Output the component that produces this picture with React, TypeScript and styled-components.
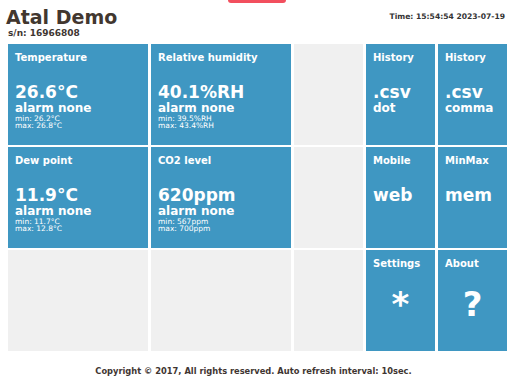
import styled, { createGlobalStyle } from "styled-components";

const GlobalStyle = createGlobalStyle`
  html, body {
    margin: 0;
    padding: 0;
    background: #ffffff;
    font-family: "DejaVu Sans", Verdana, sans-serif;
  }
`;

type Kind = "blue" | "blank";

interface TileData {
  kind: Kind;
  title?: string;
  value?: string;
  sub?: string;
  alarm?: string;
  min?: string;
  max?: string;
  symbol?: string;
}

const tiles: TileData[] = [
  { kind: "blue", title: "Temperature", value: "26.6°C", alarm: "alarm none", min: "26.2°C", max: "26.8°C" },
  { kind: "blue", title: "Relative humidity", value: "40.1%RH", alarm: "alarm none", min: "39.5%RH", max: "43.4%RH" },
  { kind: "blank" },
  { kind: "blue", title: "History", value: ".csv", sub: "dot" },
  { kind: "blue", title: "History", value: ".csv", sub: "comma" },
  { kind: "blue", title: "Dew point", value: "11.9°C", alarm: "alarm none", min: "11.7°C", max: "12.8°C" },
  { kind: "blue", title: "CO2 level", value: "620ppm", alarm: "alarm none", min: "567ppm", max: "700ppm" },
  { kind: "blank" },
  { kind: "blue", title: "Mobile", value: "web" },
  { kind: "blue", title: "MinMax", value: "mem" },
  { kind: "blank" },
  { kind: "blank" },
  { kind: "blank" },
  { kind: "blue", title: "Settings", symbol: "*" },
  { kind: "blue", title: "About", symbol: "?" },
];

const App = () => {
  return (
    <>
      <GlobalStyle />
      <Page>
        <PullTab />
        <Header>
          <Brand>
            <Title>Atal Demo</Title>
            <Serial>s/n: 16966808</Serial>
          </Brand>
          <Clock>Time: 15:54:54 2023-07-19</Clock>
        </Header>
        <Grid>
          {tiles.map((t, i) => (
            <Tile key={i} $kind={t.kind}>
              {t.title && <TileTitle>{t.title}</TileTitle>}
              {t.value && <TileValue>{t.value}</TileValue>}
              {t.symbol && <TileSymbol>{t.symbol}</TileSymbol>}
              {t.sub && <TileSub>{t.sub}</TileSub>}
              {t.alarm && <TileSub>{t.alarm}</TileSub>}
              {t.min && (
                <Range>
                  <div>min: {t.min}</div>
                  <div>max: {t.max}</div>
                </Range>
              )}
            </Tile>
          ))}
        </Grid>
        <Footer>Copyright © 2017, All rights reserved. Auto refresh interval: 10sec.</Footer>
      </Page>
    </>
  );
};

const Page = styled.div`
  position: relative;
  width: 512px;
  height: 382px;
  padding: 0 5px 0 8px;
  box-sizing: border-box;
  color: #3f3632;
`;

const PullTab = styled.div`
  position: absolute;
  top: 0;
  left: 228px;
  width: 58px;
  height: 3px;
  background: #f24f5e;
  border-radius: 0 0 3px 3px;
`;

const Header = styled.div`
  display: flex;
  justify-content: space-between;
  align-items: flex-start;
  height: 44px;
`;

const Brand = styled.div`
  display: flex;
  flex-direction: column;
`;

const Title = styled.div`
  margin: 7px 0 0 -2px;
  font-size: 19px;
  line-height: 20px;
  font-weight: bold;
  color: #42372f;
`;

const Serial = styled.div`
  margin-top: 2px;
  font-size: 9px;
  line-height: 9px;
  font-weight: bold;
`;

const Clock = styled.div`
  margin: 13px 2px 0 0;
  font-size: 7.6px;
  line-height: 7.6px;
  font-weight: bold;
  color: #333;
`;

const Grid = styled.div`
  display: grid;
  grid-template-columns: 140px 140px 69px 69px 69px;
  grid-auto-rows: 101px;
  column-gap: 3px;
  row-gap: 2px;
`;

const Tile = styled.div<{ $kind: Kind }>`
  background: ${(p) => (p.$kind === "blue" ? "#3f97c2" : "#f0f0f0")};
  color: #ffffff;
  padding: 9px 7px;
  box-sizing: border-box;
  overflow: hidden;
  display: flex;
  flex-direction: column;
`;

const TileTitle = styled.div`
  font-size: 10px;
  line-height: 10px;
  font-weight: bold;
  white-space: nowrap;
`;

const TileValue = styled.div`
  margin-top: 21px;
  font-size: 17px;
  line-height: 17px;
  font-weight: bold;
  white-space: nowrap;
`;

const TileSymbol = styled.div`
  margin-top: 18px;
  font-size: 34px;
  line-height: 34px;
  font-weight: bold;
  text-align: center;
`;

const TileSub = styled.div`
  margin-top: 1px;
  font-size: 12px;
  line-height: 12px;
  font-weight: bold;
  white-space: nowrap;
`;

const Range = styled.div`
  margin-top: 0.5px;
  font-size: 7.5px;
  line-height: 7.5px;
  white-space: nowrap;
`;

const Footer = styled.div`
  margin-top: 16px;
  padding-right: 8px;
  text-align: center;
  font-size: 8.3px;
  line-height: 8.3px;
  font-weight: bold;
`;

export default App;
